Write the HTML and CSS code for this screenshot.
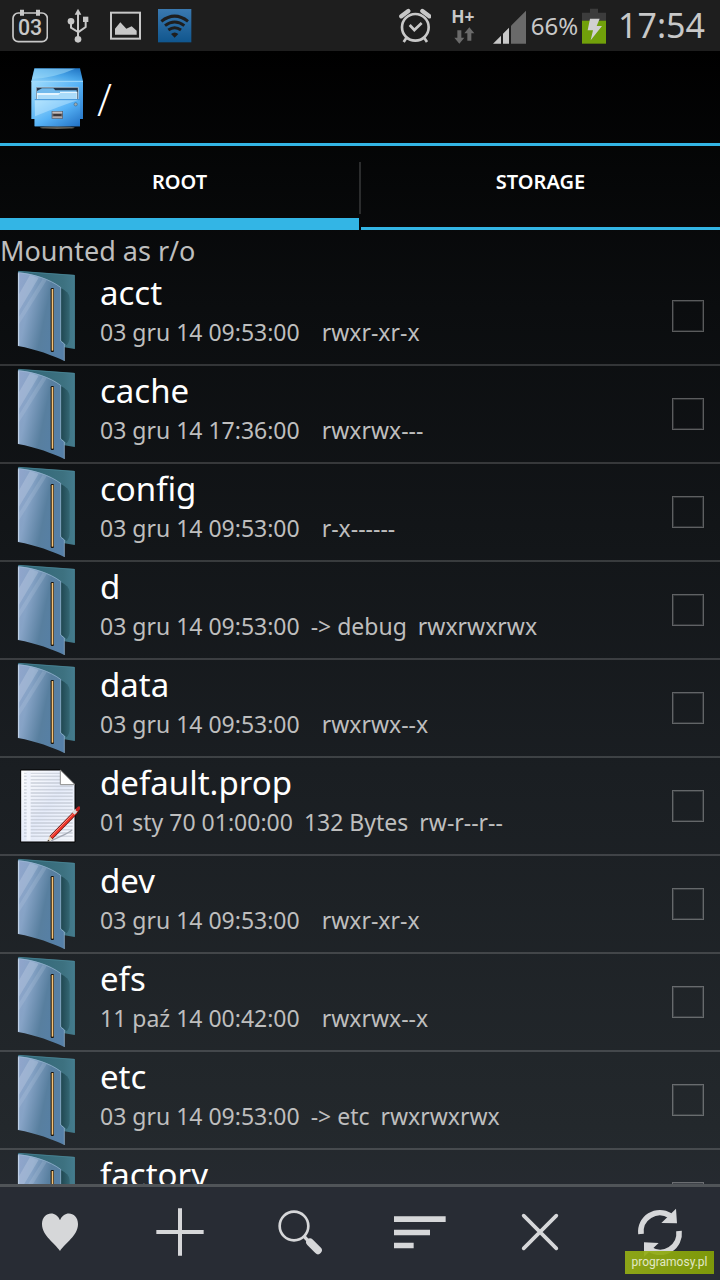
FILE: index.html
```html
<!DOCTYPE html>
<html lang="pl">
<head>
    <meta charset="UTF-8">
    <meta name="viewport" content="width=device-width, initial-scale=1.0">
    <title>Root Explorer</title>
    <link rel="stylesheet" href="styles.css">
</head>
<body>

<svg class="sprite" aria-hidden="true">
    <defs>
        <linearGradient id="front" x1="0" y1="0.2" x2="1" y2="0.6">
            <stop offset="0" stop-color="#8fa5cb"/>
            <stop offset="0.25" stop-color="#86a3c6"/>
            <stop offset="0.6" stop-color="#587f9f"/>
            <stop offset="1" stop-color="#5680a8"/>
        </linearGradient>
        <linearGradient id="back" x1="0" y1="0" x2="1" y2="0">
            <stop offset="0" stop-color="#2f6476"/>
            <stop offset="0.8" stop-color="#3d7180"/>
            <stop offset="1" stop-color="#447b8d"/>
        </linearGradient>
        <linearGradient id="shade" x1="0" y1="0" x2="1" y2="0">
            <stop offset="0" stop-color="#1f4650"/>
            <stop offset="1" stop-color="#346673"/>
        </linearGradient>
        <linearGradient id="paper" x1="0" y1="0" x2="1" y2="1">
            <stop offset="0" stop-color="#ffffff"/>
            <stop offset="0.5" stop-color="#e6ecfa"/>
            <stop offset="1" stop-color="#f8faff"/>
        </linearGradient>
        <pattern id="lines" width="10" height="10" patternUnits="userSpaceOnUse">
            <path d="M0 5H10" stroke="#b9bfcc" stroke-width="3"/>
        </pattern>
        <symbol id="folder" viewBox="0 0 192 288">
            <path d="M6 9L176 21V243L145 238L20 200z" fill="url(#back)"/>
            <path d="M134 60C150 68 160 76 161 92V205C161 218 158 226 152 232L134 216z" fill="url(#shade)"/>
            <path d="M8 10L175 22V242" fill="none" stroke="#4c8b9c" stroke-width="2"/>
            <path d="M6 13C55 18 100 32 134 58V219L145 228V279C110 262 60 244 6 234z" fill="url(#front)"/>
            <path d="M42 21L68 29L8 130V80z" fill="#c4d0e6" opacity="0.35"/>
            <path d="M80 33L92 37L8 170V148z" fill="#c4d0e6" opacity="0.2"/>
            <path d="M7 234V14C55 19 100 33 134 58V219L145 228V279" fill="none" stroke="#9fbcd8" stroke-width="2"/>
            <path d="M8 16V233" stroke="#c7d6ea" stroke-width="3"/>
            <rect x="104" y="60" width="10" height="192" rx="4" fill="#17110a"/>
            <rect x="107" y="63" width="5" height="185" fill="#f2c27a"/>
        </symbol>
        <symbol id="document" viewBox="0 0 192 288">
            <path d="M14 36H134L177 79V252H14z" fill="url(#paper)" stroke="#000000" stroke-width="3"/>
            <path d="M24 44H132V80H170V244H24z" fill="url(#lines)"/>
            <path d="M38 40V248" stroke="#f1f4fc" stroke-width="12"/>
            <path d="M133 36V80H177z" fill="#ffffff" stroke="#8b8b8b" stroke-width="3"/>
            <path d="M105 249C130 236 155 228 168 216" stroke="#a4a9b4" stroke-width="4" fill="none"/>
            <path d="M104 240L186 156" stroke="#52110d" stroke-width="13"/>
            <path d="M106 238L180 162" stroke="#ee3328" stroke-width="9"/>
            <path d="M104 236L176 162" stroke="#ff8d83" stroke-width="3"/>
            <path d="M172 166L182 156" stroke="#d8d8d8" stroke-width="11"/>
            <path d="M184 155L189 150" stroke="#c22020" stroke-width="10" stroke-linecap="round"/>
            <path d="M94 252L100 234L110 244z" fill="#e9d4ba"/>
            <path d="M94 252L96 245L101 249z" fill="#222222"/>
        </symbol>
    </defs>
</svg>

<div class="screen">
    <div class="status-bar">
        <div class="notifications">
            <svg width="36" height="36" viewBox="36 25 108 108" aria-hidden="true">
                <rect x="39" y="40" width="103" height="86" rx="16" fill="none" stroke="#c8c8c8" stroke-width="5"/>
                <path d="M60 30H72V48H60zM108 30H120V48H108z" fill="#c8c8c8"/>
                <text class="calendar-day" x="90" y="107" text-anchor="middle">03</text>
            </svg>
            <svg width="28" height="36" viewBox="192 25 84 108" fill="none" stroke="#c8c8c8" stroke-width="6" aria-hidden="true">
                <path d="M234 118V40M213 68V84L234 97M257 64V82L234 98"/>
                <path d="M224 45L234 27L244 45z" fill="#c8c8c8" stroke="none"/>
                <circle cx="213" cy="65" r="10" fill="#c8c8c8" stroke="none"/>
                <circle cx="234" cy="119" r="10" fill="#c8c8c8" stroke="none"/>
                <path d="M249 51H265V67H249z" fill="#c8c8c8" stroke="none"/>
            </svg>
            <svg width="34" height="36" viewBox="324 25 102 108" aria-hidden="true">
                <rect x="333" y="39" width="87" height="78" fill="none" stroke="#c8c8c8" stroke-width="6"/>
                <path d="M345 105V87L361 68L379 87L395 80L410 93V105z" fill="#c8c8c8"/>
            </svg>
            <svg width="34" height="36" viewBox="472 25 102 108" aria-hidden="true">
                <defs>
                    <linearGradient id="wifi" x1="0" y1="0" x2="0" y2="1">
                        <stop offset="0" stop-color="#3a79b0"/>
                        <stop offset="1" stop-color="#10568e"/>
                    </linearGradient>
                </defs>
                <rect x="472" y="28" width="100" height="100" fill="url(#wifi)"/>
                <g fill="none" stroke="#1e1e1e" stroke-width="9">
                    <path d="M482 65Q522 34 562 65"/>
                    <path d="M493 78Q522 56 551 78"/>
                    <path d="M503 91Q522 77 541 91"/>
                </g>
                <path d="M511 103Q522 94 533 103L522 114z" fill="#1e1e1e"/>
            </svg>
        </div>
        <div class="system">
            <svg class="alarm" width="32" height="36" viewBox="48 25 96 108" fill="none" stroke="#c8c8c8" aria-hidden="true">
                <circle cx="97" cy="83" r="40" stroke-width="8"/>
                <path d="M80 76L94 91L116 70" stroke-width="8"/>
                <path d="M55 50L76 34M118 34L139 50" stroke-width="13" stroke-linecap="round"/>
                <path d="M70 115L62 127M124 115L132 127" stroke-width="8"/>
            </svg>
            <svg class="network" width="26" height="36" viewBox="203 25 78 108" aria-hidden="true">
                <text class="network-type" x="204" y="71">H+</text>
                <path d="M222 92H234V114H243L228 132L213 114H222z" fill="#6a6a6a"/>
                <path d="M252 123H264V101H273L258 83L243 101H252z" fill="#6a6a6a"/>
            </svg>
            <svg width="34" height="36" viewBox="333 25 102 108" aria-hidden="true">
                <path d="M333 132L357 108V132zM363 102L381 84V132H363z" fill="#c8c8c8"/>
                <path d="M387 78L432 33V132H387z" fill="#6a6a6a"/>
            </svg>
            <span class="percent">66%</span>
            <svg class="battery" width="24" height="36" viewBox="606 25 72 108" aria-hidden="true">
                <path d="M630 27H654V39H678V63H606V39H630z" fill="#3c3c3c"/>
                <path d="M606 63H678V132H606z" fill="#71a00a"/>
                <path d="M630 57H659L650 79H666L632 122L639 92H623z" fill="#d0d0d0"/>
            </svg>
            <span class="clock">17:54</span>
        </div>
    </div>

    <header class="header">
        <svg width="55" height="64" viewBox="90 197 165 192" aria-hidden="true">
            <defs>
                <linearGradient id="lid" x1="0" y1="1" x2="1" y2="0">
                    <stop offset="0" stop-color="#8fd2f8"/>
                    <stop offset="0.5" stop-color="#4aa7ea"/>
                    <stop offset="1" stop-color="#1c70c0"/>
                </linearGradient>
                <linearGradient id="body" x1="0" y1="0" x2="1" y2="1">
                    <stop offset="0" stop-color="#a3defd"/>
                    <stop offset="0.5" stop-color="#56b2f6"/>
                    <stop offset="1" stop-color="#2170c3"/>
                </linearGradient>
                <linearGradient id="handle" x1="0" y1="0" x2="0" y2="1">
                    <stop offset="0" stop-color="#f5efec"/>
                    <stop offset="0.5" stop-color="#625b5e"/>
                    <stop offset="1" stop-color="#c9c3c3"/>
                </linearGradient>
            </defs>
            <ellipse cx="172" cy="385" rx="52" ry="4" fill="#5e5e57"/>
            <path d="M103 207H240L249 246H94z" fill="url(#lid)"/>
            <path d="M104 208H225Q165 235 96 239z" fill="#a6dffa" opacity="0.5"/>
            <path d="M94 245H249V359H240V381H104V359H94z" fill="url(#body)"/>
            <path d="M94 246H249" stroke="#a2dafb" stroke-width="3"/>
            <path d="M108 263H235V299H108z" fill="#24364b"/>
            <path d="M111 275L126 267H160L166 273H230V300H111z" fill="#70b9ec"/>
            <path d="M111 281H180V277H232V300H111z" fill="#e4f5ff"/>
            <path d="M113 287H175L181 281H230V300H113z" fill="#aadbf9"/>
            <path d="M109 299V264H235V299" fill="none" stroke="#d5efff" stroke-width="2"/>
            <path d="M104 301H240V381H104z" fill="url(#body)"/>
            <path d="M105 302H235Q180 320 105 351z" fill="#c8ecff" opacity="0.45"/>
            <path d="M104 301H240" stroke="#4094da" stroke-width="3"/>
            <circle cx="227" cy="315" r="5" fill="#a1a9a8" stroke="#396e98" stroke-width="2"/>
            <rect x="156" y="336" width="32" height="21" fill="url(#handle)" stroke="#555b68" stroke-width="2"/>
            <path d="M160 347H184" stroke="#3c373a" stroke-width="6"/>
        </svg>
        <h1 class="path">/</h1>
    </header>

    <nav class="tabs">
        <a href="#root" class="tab active">ROOT</a>
        <span class="divider"></span>
        <a href="#storage" class="tab">STORAGE</a>
    </nav>

    <main class="files" id="root">
        <p class="mounted">Mounted as r/o</p>
        <ul class="file-list">
            <li class="file">
                <svg class="file-icon" aria-hidden="true"><use href="#folder"/></svg>
                <label class="info" for="acct">
                    <span class="name">acct</span>
                    <span class="meta"><span>03 gru 14 09:53:00</span><span></span><span>rwxr-xr-x</span></span>
                </label>
                <input type="checkbox" class="check" id="acct">
            </li>
            <li class="file">
                <svg class="file-icon" aria-hidden="true"><use href="#folder"/></svg>
                <label class="info" for="cache">
                    <span class="name">cache</span>
                    <span class="meta"><span>03 gru 14 17:36:00</span><span></span><span>rwxrwx---</span></span>
                </label>
                <input type="checkbox" class="check" id="cache">
            </li>
            <li class="file">
                <svg class="file-icon" aria-hidden="true"><use href="#folder"/></svg>
                <label class="info" for="config">
                    <span class="name">config</span>
                    <span class="meta"><span>03 gru 14 09:53:00</span><span></span><span>r-x------</span></span>
                </label>
                <input type="checkbox" class="check" id="config">
            </li>
            <li class="file">
                <svg class="file-icon" aria-hidden="true"><use href="#folder"/></svg>
                <label class="info" for="d">
                    <span class="name">d</span>
                    <span class="meta"><span>03 gru 14 09:53:00</span><span>-&gt; debug</span><span>rwxrwxrwx</span></span>
                </label>
                <input type="checkbox" class="check" id="d">
            </li>
            <li class="file">
                <svg class="file-icon" aria-hidden="true"><use href="#folder"/></svg>
                <label class="info" for="data">
                    <span class="name">data</span>
                    <span class="meta"><span>03 gru 14 09:53:00</span><span></span><span>rwxrwx--x</span></span>
                </label>
                <input type="checkbox" class="check" id="data">
            </li>
            <li class="file">
                <svg class="file-icon" aria-hidden="true"><use href="#document"/></svg>
                <label class="info" for="default-prop">
                    <span class="name">default.prop</span>
                    <span class="meta"><span>01 sty 70 01:00:00</span><span>132 Bytes</span><span>rw-r--r--</span></span>
                </label>
                <input type="checkbox" class="check" id="default-prop">
            </li>
            <li class="file">
                <svg class="file-icon" aria-hidden="true"><use href="#folder"/></svg>
                <label class="info" for="dev">
                    <span class="name">dev</span>
                    <span class="meta"><span>03 gru 14 09:53:00</span><span></span><span>rwxr-xr-x</span></span>
                </label>
                <input type="checkbox" class="check" id="dev">
            </li>
            <li class="file">
                <svg class="file-icon" aria-hidden="true"><use href="#folder"/></svg>
                <label class="info" for="efs">
                    <span class="name">efs</span>
                    <span class="meta"><span>11 paź 14 00:42:00</span><span></span><span>rwxrwx--x</span></span>
                </label>
                <input type="checkbox" class="check" id="efs">
            </li>
            <li class="file">
                <svg class="file-icon" aria-hidden="true"><use href="#folder"/></svg>
                <label class="info" for="etc">
                    <span class="name">etc</span>
                    <span class="meta"><span>03 gru 14 09:53:00</span><span>-&gt; etc</span><span>rwxrwxrwx</span></span>
                </label>
                <input type="checkbox" class="check" id="etc">
            </li>
            <li class="file">
                <svg class="file-icon" aria-hidden="true"><use href="#folder"/></svg>
                <label class="info" for="factory">
                    <span class="name">factory</span>
                </label>
                <input type="checkbox" class="check" id="factory">
            </li>
        </ul>
    </main>

    <footer class="toolbar">
        <button type="button" class="tool" aria-label="Bookmarks">
            <svg viewBox="-81 -81 162 162"><path d="M0 57C-14 34 -54 12 -54 -24C-54 -60 -12 -68 0 -35C12 -68 54 -60 54 -24C54 12 14 34 0 57z" fill="#d6d7d9"/></svg>
        </button>
        <button type="button" class="tool" aria-label="New">
            <svg viewBox="-81 -81 162 162"><path d="M-71 0H71M0 -71V71" stroke="#d6d7d9" stroke-width="12"/></svg>
        </button>
        <button type="button" class="tool" aria-label="Search">
            <svg viewBox="-81 -81 162 162" fill="none" stroke="#d6d7d9">
                <circle cx="-18" cy="-18" r="43" stroke-width="8"/>
                <path d="M11 12L26 28" stroke-width="10"/>
                <path d="M30 31L54 55" stroke-width="23" stroke-linecap="round"/>
            </svg>
        </button>
        <button type="button" class="tool" aria-label="Sort">
            <svg viewBox="-81 -81 162 162"><path d="M-78 -47H77V-30H-78zM-78 -7H30V10H-78zM-78 32H-19V49H-78z" fill="#d6d7d9"/></svg>
        </button>
        <button type="button" class="tool" aria-label="Close">
            <svg viewBox="-81 -81 162 162"><path d="M-49 -49L49 49M49 -49L-49 49" stroke="#d6d7d9" stroke-width="11" stroke-linecap="round"/></svg>
        </button>
        <button type="button" class="tool" aria-label="Refresh">
            <svg viewBox="-81 -81 162 162">
                <path d="M-57 6A57 57 0 0 1 30 -49M57 -3A57 57 0 0 1 -30 52" fill="none" stroke="#d6d7d9" stroke-width="17"/>
                <path d="M48 -70L51 -26L4 -27zM-48 74L-48 31L-4 33z" fill="#d6d7d9"/>
            </svg>
        </button>
        <span class="watermark">programosy.pl</span>
    </footer>
</div>

</body>
</html>
```

FILE: styles.css
```css
* {
    box-sizing: border-box;
}
body {
    margin: 0;
    font-family: "Noto Sans", "Open Sans", sans-serif;
    background-color: #000;
    color: #fff;
}
.sprite {
    position: absolute;
    width: 0;
    height: 0;
}
.screen {
    display: flex;
    flex-direction: column;
    height: 100vh;
    background: linear-gradient(#000 4%, #0b0d0f 24%, #1a1e22 60%, #23282c 88%, #292d36);
}

/* status bar */
.status-bar {
    display: flex;
    justify-content: space-between;
    align-items: center;
    height: 51px;
    padding: 0 15px 0 12px;
    background-color: #1e1e1e;
    color: #c8c8c8;
}
.notifications, .system {
    display: flex;
    align-items: center;
}
.notifications {
    gap: 16px;
}
.system {
    gap: 4px;
}
.calendar-day {
    font: 500 64px "Roboto", sans-serif;
    fill: #c8c8c8;
}
.alarm {
    margin-right: 16px;
}
.network {
    margin-right: 12px;
}
.network-type {
    font: bold 52px "Noto Sans", sans-serif;
    fill: #c8c8c8;
}
.percent {
    font-size: 24px;
}
.battery {
    margin-right: 8px;
}
.clock {
    font-size: 34px;
    line-height: 48px;
    padding-bottom: 2px;
}

/* header */
.header {
    display: flex;
    align-items: center;
    gap: 12px;
    height: 95px;
    padding-left: 30px;
    border-bottom: 3px solid #33b5e5;
}
.path {
    margin: 0;
    padding-top: 4px;
    font-family: "Open Sans", "Noto Sans", sans-serif;
    font-size: 44px;
    font-weight: 300;
    line-height: 60px;
}

/* tabs */
.tabs {
    display: flex;
    height: 84px;
}
.tab {
    flex: 1;
    padding-bottom: 9px;
    border-bottom: 3px solid #33b5e5;
    color: #fff;
    font-size: 20px;
    font-weight: 600;
    line-height: 72px;
    text-align: center;
    text-decoration: none;
}
.tab.active {
    padding-bottom: 0;
    border-bottom-width: 12px;
}
.divider {
    width: 2px;
    margin: 16px 0;
    background-color: #2b2c2d;
}

/* file list */
.files {
    flex: 1;
    min-height: 0;
    overflow-y: auto;
    scrollbar-width: none;
}
.mounted {
    height: 38px;
    margin: 0;
    color: #bebebe;
    font-size: 27px;
    line-height: 41px;
}
.file-list {
    margin: 0;
    padding: 0;
    list-style-type: none;
}
.file {
    display: flex;
    align-items: center;
    gap: 20px;
    height: 98px;
    padding: 0 16px;
    border-bottom: 2px solid rgba(255, 255, 255, 0.16);
}
.file-icon {
    width: 64px;
    height: 96px;
}
.info {
    flex: 1;
    align-self: flex-start;
    padding-top: 3px;
}
.name {
    display: block;
    font-size: 33px;
    line-height: 44px;
}
.meta {
    display: flex;
    gap: 11px;
    color: #bebebe;
    font-size: 23px;
    line-height: 34px;
}
.check {
    appearance: none;
    width: 32px;
    height: 32px;
    margin: 0;
    border: 1px solid rgba(255, 255, 255, 0.32);
    box-shadow: inset 0 0 0 1px rgba(255, 255, 255, 0.12);
}
.check:checked {
    background-color: #33b5e5;
}

/* bottom toolbar */
.toolbar {
    position: relative;
    display: flex;
    height: 96px;
    border-top: 3px solid #505458;
    background-color: #282c34;
}
.tool {
    flex: 1;
    display: flex;
    justify-content: center;
    align-items: center;
    padding: 0 0 4px;
    border: none;
    background: none;
    cursor: pointer;
}
.tool svg {
    width: 54px;
    height: 54px;
}
.watermark {
    position: absolute;
    right: 6px;
    bottom: 6px;
    width: 89px;
    background: linear-gradient(90deg, rgba(151, 177, 20, 0.9), rgba(130, 158, 8, 0.95));
    color: #e2e8c6;
    font-family: "Roboto", sans-serif;
    font-size: 12px;
    line-height: 23px;
    text-align: center;
}
```
